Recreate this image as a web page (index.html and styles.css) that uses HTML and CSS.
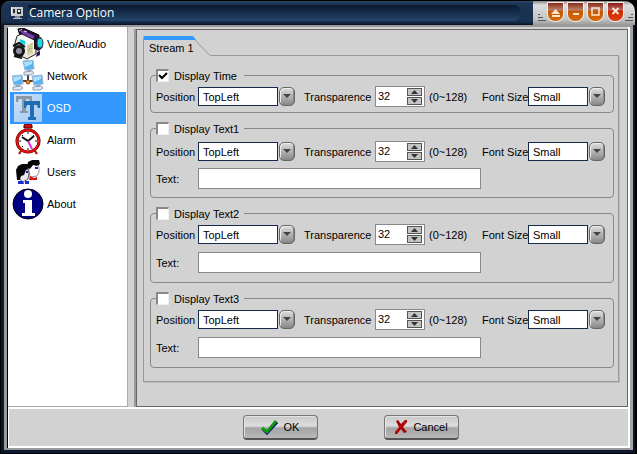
FILE: index.html
```html
<!doctype html>
<html lang="en">
<head>
<meta charset="UTF-8">
<title>Camera Option</title>
<link rel="stylesheet" href="styles.css">
</head>
<body>
	<div class="window">
		<div class="titlebar">
			<svg class="logo" width="14" height="14" viewBox="0 0 14 14">
				<path d="M1 1h12v9H1z" fill="#c9ccd0"/>
				<path d="M3 3h2v4H3zM7 3h4v5H7z" fill="#273038"/>
				<path d="M8 4h2v2H8zM1 1h1v7H1z" fill="#fff"/>
				<path d="M5 10h5v2H5z" fill="#858b93"/>
				<path d="M3 12h9v1H3z" fill="#b9bdc2"/>
			</svg>
			<h1>Camera Option</h1>
			<div class="caps">
				<svg width="9" height="8" viewBox="0 0 9 8"><path d="M1 1.500h2M1 4.500h5M1 7.500h8" stroke="#555"/></svg>
				<button aria-label="Roll up"><svg width="15" height="18" viewBox="0 0 15 18"><path d="M7.500 6L12 11H3z M4 12h8v2H4z" fill="#fbe6d0"/></svg></button>
				<button aria-label="Minimize"><svg width="15" height="18" viewBox="0 0 15 18"><path d="M5 10h6v2H5z" fill="#fbe6d0"/></svg></button>
				<button aria-label="Maximize"><svg width="15" height="18" viewBox="0 0 15 18"><path d="M4 5h7v7H4z" fill="none" stroke="#fbe6d0" stroke-width="1.500"/></svg></button>
				<button class="close" aria-label="Close"><svg width="15" height="18" viewBox="0 0 15 18"><path d="M4.500 5l6 6M10.500 5l-6 6" stroke="#fbe6d0" stroke-width="2"/></svg></button>
				<svg width="9" height="8" viewBox="0 0 9 8"><path d="M6 1.500h2M3 4.500h5M0 7.500h8" stroke="#555"/></svg>
			</div>
		</div>

		<div class="frame">
			<div class="main">
				<nav class="sidebar">
					<a href="#video">
						<svg width="32" height="32" viewBox="0 0 32 32">
							<path d="M6 1l5-1 16 7v6l-5 2L8 8z" fill="#24103a" stroke="#000"/>
							<path d="M9 3l13 6M10 6l11 5" stroke="#7d3fb5" stroke-width="2"/>
							<path d="M7 3l3-2M12 3l3 1" stroke="#ddd"/>
							<path d="M5 8l5-2 14 7v13l-9 5L3 25V15z" fill="#e6e6de" stroke="#222"/>
							<path d="M5 9l9 5v14l9-5V13L9 7z" fill="#f8f8f4"/>
							<path d="M15 17l6-3v11l-6 3z" fill="#dcd8a8"/>
							<path d="M16 18l4 7M20 16l-4 9M15 22l6-2" stroke="#a5a06a" stroke-dasharray="1 1"/>
							<path d="M8 11l5 2v4l-5-2z" fill="#17cfd4"/>
							<circle cx="7" cy="23" r="6" fill="#161616"/>
							<circle cx="7" cy="23" r="3" fill="#8e8e9e"/>
							<path d="M1 18l6-3 6 4M2 28l8 2" stroke="#111" stroke-width="2" fill="none"/>
							<path d="M22 10l7-1 2 4v6l-4 4-5-2z" fill="#171126"/>
							<ellipse cx="28" cy="15" rx="3" ry="5" fill="#19dce4" stroke="#444"/>
							<path d="M25 24l3-1v4l-4 2z" fill="#3a145a"/>
						</svg>
						<span>Video/Audio</span>
					</a>
					<a href="#network">
						<svg width="32" height="32" viewBox="0 0 32 32">
							<path d="M16 13v9M7 21h20" stroke="#444" stroke-width="2" fill="none"/>
							<circle cx="16" cy="22" r="2" fill="#ee8a2c" stroke="#a34b10"/>
							<g id="pc">
								<path d="M11 1l10-1 1 9-9 1z" fill="#55b4f5" stroke="#9db3d0"/>
								<path d="M12 2l8-1v3l-7 3z" fill="#a9e0ff"/>
								<path d="M15 10h4v2h-4z" fill="#9aa8bd"/>
								<path d="M12 12l8-1 2 2-3 2h-7z" fill="#dfe6f0" stroke="#8f9fb8"/>
							</g>
							<use href="#pc" x="-11" y="15"/>
							<use href="#pc" x="9" y="15"/>
						</svg>
						<span>Network</span>
					</a>
					<a href="#osd" class="selected">
						<svg width="32" height="32" viewBox="0 0 32 32">
							<defs>
								<linearGradient id="paper" x1="0" y1="0" x2="1" y2="1">
									<stop offset="0" stop-color="#cfe2f7"/>
									<stop offset="1" stop-color="#9fc8f2"/>
								</linearGradient>
							</defs>
							<path d="M2 2h28v28H2z" fill="url(#paper)"/>
							<path d="M4 4h16v6h-2l-1-3h-3v12h2v2H8v-2h2V7H7l-1 3H4z" fill="#8b98a8"/>
							<path d="M12 9h16v7h-2l-1-3h-3v12h2v3h-8v-3h2V13h-3l-1 3h-2z" fill="#1f6bb4"/>
						</svg>
						<span>OSD</span>
					</a>
					<a href="#alarm">
						<svg width="32" height="32" viewBox="0 0 32 32">
							<path d="M12 4V1l2-1h4l2 1v3z" fill="#d90b0b" stroke="#400"/>
							<path d="M9 27l-2 3M23 27l2 3" stroke="#b00" stroke-width="2"/>
							<circle cx="16" cy="17" r="11" fill="#fff" stroke="#400" stroke-width="3"/>
							<circle cx="16" cy="17" r="11" fill="none" stroke="#e80f0f" stroke-width="2"/>
							<path d="M16 8v2M16 24v2M7 17h2M23 17h2M10 11l1 1M22 11l-1 1M10 23l1-1" stroke="#111"/>
							<path d="M10 13l6 4 6-5" stroke="#111" stroke-width="2" fill="none"/>
							<path d="M16 17l4 8" stroke="#e22be0" stroke-width="2"/>
						</svg>
						<span>Alarm</span>
					</a>
					<a href="#users">
						<svg width="32" height="32" viewBox="0 0 32 32">
							<path d="M16 9l4-4 6 2 1 5v4l-2 4-7 1z" fill="#fff" stroke="#999"/>
							<path d="M15 11l1-5 4-2h7l1 4-3 2-4-1-3 4z" fill="#060606"/>
							<path d="M9 14l7-1 1 4-1 6-5 3-4-3z" fill="#e9e9ee" stroke="#555"/>
							<path d="M4 14l2-4 4-2h6l1 4-3 2-2 5-3 1-1 4H5z" fill="#060606"/>
							<path d="M14 16h2M23 12h3" stroke="#1420d8" stroke-width="2"/>
							<path d="M6 25h5l1 3H6zM13 25h4v3h-4z" fill="#1430d0"/>
							<path d="M18 20l4 2 3-1v3h-8z" fill="#d81414"/>
						</svg>
						<span>Users</span>
					</a>
					<a href="#about">
						<svg width="32" height="32" viewBox="0 0 32 32">
							<circle cx="16" cy="16" r="15" fill="#000084" stroke="#000" stroke-width="1"/>
							<circle cx="16" cy="6" r="4" fill="#fff"/>
							<path d="M11 12h9v13h3v3H10v-3h3V15h-2z" fill="#fff"/>
						</svg>
						<span>About</span>
					</a>
				</nav>

				<div class="stage">
					<div class="tabs">
						<button class="tab">Stream 1</button>
						<svg width="18" height="20" viewBox="0 0 18 20"><path d="M0 2L17 19.500H18" fill="none" stroke="#999"/><path d="M0 0l3 4H0z" fill="#3399ff"/></svg>
						<div class="rest"></div>
					</div>
					<form class="panel">
						<fieldset>
							<legend><input type="checkbox" id="show_time" checked><label for="show_time">Display Time</label></legend>
							<div class="row">
								<label for="pos0">Position</label>
								<div class="combo"><i class="box"></i><i class="arrow"></i><select id="pos0"><option>TopLeft</option></select></div>
								<label class="trans" for="tr0">Transparence</label>
								<div class="spin"><input id="tr0" type="text" value="32"><div><button type="button" aria-label="Up"></button><button type="button" class="down" aria-label="Down"></button></div></div>
								<span class="range">(0~128)</span>
								<label for="fs0">Font Size</label>
								<div class="combo"><i class="box"></i><i class="arrow"></i><select id="fs0"><option>Small</option></select></div>
							</div>
						</fieldset>
						<fieldset class="low">
							<legend><input type="checkbox" id="show_text1"><label for="show_text1">Display Text1</label></legend>
							<div class="row">
								<label for="pos1">Position</label>
								<div class="combo"><i class="box"></i><i class="arrow"></i><select id="pos1"><option>TopLeft</option></select></div>
								<label class="trans" for="tr1">Transparence</label>
								<div class="spin"><input id="tr1" type="text" value="32"><div><button type="button" aria-label="Up"></button><button type="button" class="down" aria-label="Down"></button></div></div>
								<span class="range">(0~128)</span>
								<label for="fs1">Font Size</label>
								<div class="combo"><i class="box"></i><i class="arrow"></i><select id="fs1"><option>Small</option></select></div>
							</div>
							<div class="text"><label for="text1">Text:</label><input type="text" id="text1"></div>
						</fieldset>
						<fieldset>
							<legend><input type="checkbox" id="show_text2"><label for="show_text2">Display Text2</label></legend>
							<div class="row">
								<label for="pos2">Position</label>
								<div class="combo"><i class="box"></i><i class="arrow"></i><select id="pos2"><option>TopLeft</option></select></div>
								<label class="trans" for="tr2">Transparence</label>
								<div class="spin"><input id="tr2" type="text" value="32"><div><button type="button" aria-label="Up"></button><button type="button" class="down" aria-label="Down"></button></div></div>
								<span class="range">(0~128)</span>
								<label for="fs2">Font Size</label>
								<div class="combo"><i class="box"></i><i class="arrow"></i><select id="fs2"><option>Small</option></select></div>
							</div>
							<div class="text"><label for="text2">Text:</label><input type="text" id="text2"></div>
						</fieldset>
						<fieldset>
							<legend><input type="checkbox" id="show_text3"><label for="show_text3">Display Text3</label></legend>
							<div class="row">
								<label for="pos3">Position</label>
								<div class="combo"><i class="box"></i><i class="arrow"></i><select id="pos3"><option>TopLeft</option></select></div>
								<label class="trans" for="tr3">Transparence</label>
								<div class="spin"><input id="tr3" type="text" value="32"><div><button type="button" aria-label="Up"></button><button type="button" class="down" aria-label="Down"></button></div></div>
								<span class="range">(0~128)</span>
								<label for="fs3">Font Size</label>
								<div class="combo"><i class="box"></i><i class="arrow"></i><select id="fs3"><option>Small</option></select></div>
							</div>
							<div class="text"><label for="text3">Text:</label><input type="text" id="text3"></div>
						</fieldset>
					</form>
				</div>
			</div>

			<div class="footer">
				<button class="bt">
					<svg width="18" height="16" viewBox="0 0 18 16"><path d="M2 10l4 4L16 3" fill="none" stroke="#000080" stroke-width="3"/><path d="M1 9l5 4L15 2" fill="none" stroke="#0a9a0a" stroke-width="3"/></svg>
					<span>OK</span>
				</button>
				<button class="bt cancel">
					<svg width="14" height="16" viewBox="0 0 14 16"><path d="M2 2l2-1 3 4 4-4h2v2L9 8l4 5-3 1-3-4-4 5H1v-2l4-5z" fill="#a80000"/><path d="M1 14l5-6 6-6" stroke="#e01010" stroke-width="1" fill="none"/></svg>
					<span>Cancel</span>
				</button>
			</div>
		</div>
	</div>
</body>
</html>
```
FILE: styles.css
```css
*{
	box-sizing:border-box;
}
body{
	margin:0;
	background:#000;
	color:#000;
	font-family:"Liberation Sans",sans-serif;
	font-size:11px;
	line-height:16px;
}
button,input,select{
	margin:0;
	padding:0;
	border:0;
	color:inherit;
	font:inherit;
}
.window{
	display:flex;
	flex-direction:column;
	min-height:100vh;
	padding:1px 2px 2px 1px;
}
/* title bar */
.titlebar{
	display:flex;
	height:24px;
	padding-left:8px;
	border-radius:8px 10px 0 0;
	background:linear-gradient(#34506f 0,#1c3554 2px,#18304f 21px,#07101f 24px);
}
.logo{
	margin:5px 4px 0 1px;
}
.titlebar h1{
	flex:1;
	height:16px;
	margin:4px 13px 0 0;
	border-radius:0 6px 6px 0;
	background:linear-gradient(#0a1a30,#25456a);
	color:#fff;
	font:12px/16px "Open Sans","Noto Sans",sans-serif;
	padding-left:1px;
}
.caps{
	display:flex;
	align-items:flex-end;
	gap:5px;
	padding:0 1px 4px 4px;
	border-radius:0 10px 0 0;
	background:linear-gradient(#888,#ddd 4px,#c4c4c4 18px,#999);
}
.caps > svg:first-child{
	margin-right:-3px;
}
.caps > svg:last-child{
	margin-left:-3px;
}
.caps button{
	width:15px;
	height:18px;
	border-radius:0 0 7px 7px;
	background:linear-gradient(#8a2a14,#b98272 7px,#c85500 8px,#d86a08);
	box-shadow:0 0 0 1px #eee;
}
.caps .close{
	background:linear-gradient(#8a1a14,#b96a62 7px,#cc2600 8px,#e04410);
}
.caps button svg{
	display:block;
}
/* window frame */
.frame{
	flex:1;
	display:flex;
	flex-direction:column;
	border:solid #0b1830;
	border-width:0 2px 3px 3px;
	box-shadow:inset 3px 0 #999,inset 0 3px #999,inset -3px 0 #a5a5a5,inset 0 -2px #999;
	padding:2px 3px 2px 4px;
}
.main{
	flex:1;
	display:flex;
	background:#d2d2d2;
	border-right:2px solid #fff;
	border-bottom:2px solid #fff;
}
.sidebar{
	flex:none;
	width:120px;
	margin-right:8px;
	padding:1px;
	background:#fff;
	border-right:1px solid #aaa;
	border-bottom:1px solid #aaa;
}
.sidebar a{
	display:flex;
	align-items:center;
	gap:3px;
	height:32px;
	margin-left:1px;
	padding-left:2px;
	color:#000;
	text-decoration:none;
}
.sidebar .selected{
	background:#3399ff;
	color:#fff;
}
.stage{
	flex:1;
	min-width:0;
	margin:2px 0 0 0;
	padding:6px 8px 24px 6px;
	border:1px solid #666;
	box-shadow:-2px 0 #999;
}
/* tabs */
.tabs{
	display:flex;
}
.tab{
	width:50px;
	height:20px;
	padding-left:5px;
	border-top:4px solid #3399ff;
	border-left:1px solid #999;
	border-radius:2px 0 0 0;
	background:none;
	text-align:left;
	white-space:nowrap;
}
.rest{
	flex:1;
	border-bottom:1px solid #999;
}
.panel{
	display:flex;
	flex-direction:column;
	gap:9px;
	padding:13px 4px 13px 6px;
	border:solid #999;
	border-width:0 1px 1px 1px;
	box-shadow:1px 1px #bbb;
}
fieldset{
	min-width:0;
	margin:0;
	padding:4px 8px 5px 5px;
	border:1px solid #888;
	border-radius:4px;
}
fieldset:not(:first-child){
	padding-bottom:9px;
}
legend{
	display:flex;
	align-items:center;
	gap:5px;
	width:88px;
	height:13px;
	padding:0;
	white-space:nowrap;
}
input[type=checkbox]{
	appearance:none;
	flex:none;
	width:13px;
	height:13px;
	border:solid;
	border-width:2px 1px 1px 2px;
	border-color:#888 #eee #eee #888;
	background:#fff;
}
input[type=checkbox]:checked{
	background:#fff url("data:image/svg+xml,%3Csvg xmlns='http://www.w3.org/2000/svg' viewBox='0 0 10 10'%3E%3Cpath d='M1 4l3 3 5-5' fill='none' stroke='%23000' stroke-width='2'/%3E%3C/svg%3E") center/10px no-repeat;
}
.row{
	display:grid;
	grid-template-columns:42px 97px 80px 50px 1fr 46px 77px;
	align-items:center;
	height:21px;
	white-space:nowrap;
}
.trans{
	padding-left:9px;
}
.range{
	padding-left:4px;
}
.combo{
	display:grid;
	grid-template-columns:1fr 16px;
	column-gap:1px;
	height:19px;
}
.combo > *{
	grid-row:1;
}
.combo .box{
	grid-column:1;
	border:1px solid #142c4c;
	background:#fff;
}
.combo .arrow{
	grid-column:2;
	border:1px solid #666;
	border-radius:5px;
	background:url("data:image/svg+xml,%3Csvg xmlns='http://www.w3.org/2000/svg' viewBox='0 0 8 5'%3E%3Cpath d='M0 0h8L4 4z' fill='%23444'/%3E%3C/svg%3E") center/8px 5px no-repeat,linear-gradient(#ddd,#aaa 60%,#888);
	box-shadow:inset 1px 1px #eee,inset -1px -1px #888;
}
.combo select{
	grid-column:1 / 3;
	appearance:none;
	padding-left:5px;
	background:none;
}
.spin{
	display:flex;
	height:21px;
	border:1px solid #888;
	background:#fff;
}
.spin input{
	flex:1;
	min-width:0;
	height:17px;
	padding-left:2px;
	background:none;
}
.spin div{
	display:flex;
	flex-direction:column;
	gap:1px;
	width:15px;
	margin:1px 2px 1px 0;
}
.spin button{
	flex:1;
	border:1px solid #555;
	background:#c4c4c4 url("data:image/svg+xml,%3Csvg xmlns='http://www.w3.org/2000/svg' viewBox='0 0 7 4'%3E%3Cpath d='M0 4h7L3.500 0z' fill='%23333'/%3E%3C/svg%3E") center/7px 4px no-repeat;
}
.spin .down{
	background-image:url("data:image/svg+xml,%3Csvg xmlns='http://www.w3.org/2000/svg' viewBox='0 0 7 4'%3E%3Cpath d='M0 0h7L3.500 4z' fill='%23333'/%3E%3C/svg%3E");
}
.text{
	display:flex;
	align-items:center;
	margin-top:7px;
}
.text label{
	width:42px;
}
.text input{
	flex:0 1 283px;
	min-width:0;
	height:21px;
	padding:0 4px;
	border:1px solid #888;
	background:#fff;
}
.low{
	padding-top:6px;
}
fieldset.low{
	padding-bottom:8px;
}
.low .text{
	margin-top:6px;
}
/* OK / Cancel */
.footer{
	display:flex;
	justify-content:center;
	gap:66px;
	padding:6px 0 6px 64px;
	border:solid;
	border-width:0 2px 2px 1px;
	border-color:#fff;
	background:#d2d2d2;
}
.bt{
	display:flex;
	align-items:center;
	justify-content:center;
	gap:5px;
	width:75px;
	height:25px;
	border:1px solid #777;
	border-bottom:2px solid #555;
	border-radius:4px;
	background:linear-gradient(#c8c8c8,#ddd 45%,#a5a5a5 55%,#b8b8b8);
	box-shadow:inset 1px 1px #e4e4e4;
}
```
